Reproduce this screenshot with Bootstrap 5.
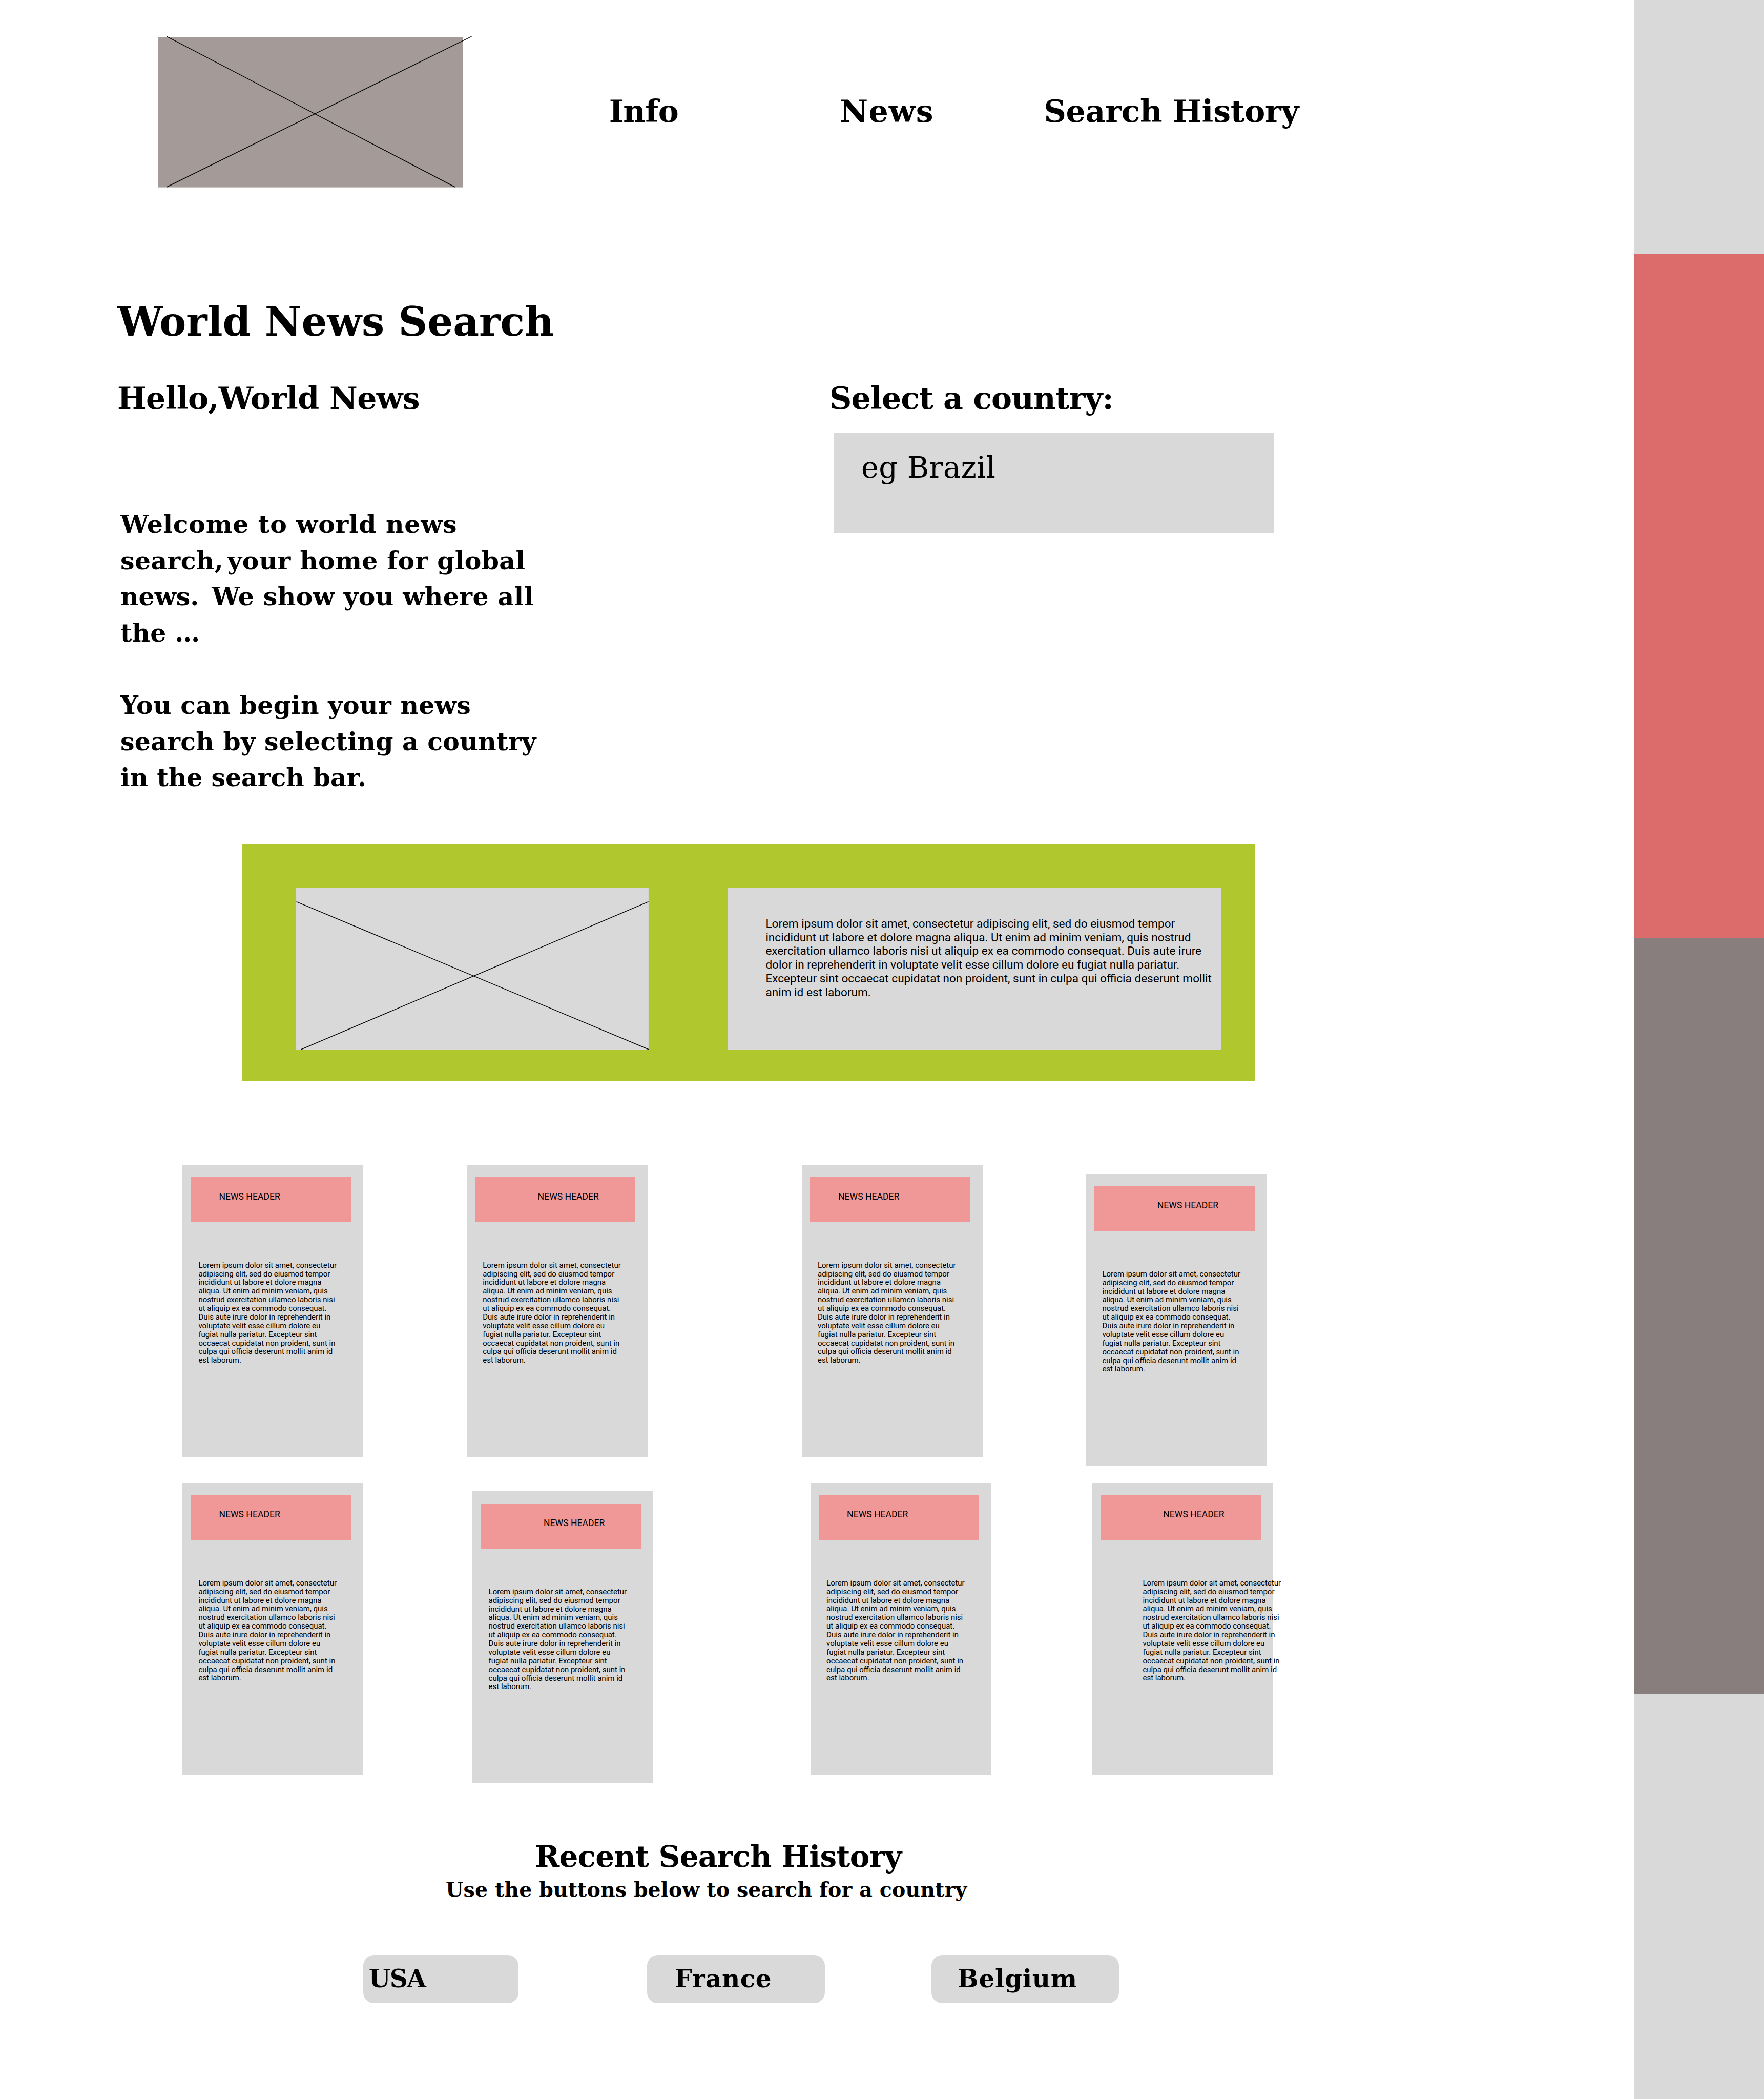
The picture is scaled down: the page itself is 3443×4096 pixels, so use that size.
<!DOCTYPE html>
<html lang="en">
<head>
<meta charset="utf-8">
<title>World News Search</title>
<link href="https://cdn.jsdelivr.net/npm/bootstrap@5.3.0/dist/css/bootstrap.min.css" rel="stylesheet">
<script src="https://cdn.jsdelivr.net/npm/bootstrap@5.3.0/dist/js/bootstrap.bundle.min.js"></script>
<style>
body{width:3443px;height:4096px;background:#fff;color:#000;font-family:Roboto,"Liberation Sans",sans-serif;overflow:hidden}
.slab{font-family:"DejaVu Serif",serif;font-weight:700;white-space:nowrap;line-height:1;margin:0;color:#000}
.page{width:3189px}
.rail{width:254px}
.rail-a{height:494.5px;background:#d9d9d9}
.rail-b{height:1336px;background:#dc6b6b}
.rail-c{height:1474.5px;background:#887e7d}
.top-bar{height:588.5px;padding:72px 0 0 307.7px}
.logo-box{width:595.3px;height:293.6px;overflow:visible}
.menu{margin:114.8px 0 0 285.7px;font-size:60px}
.menu .slab{padding:0}
.m-info{width:450.7px;letter-spacing:-.5px}
.m-news{width:398.1px;letter-spacing:1.2px}
.m-hist{letter-spacing:-.2px}
.main-title{font-size:78.5px;margin-left:229.2px}
.intro{height:900.2px;margin-top:80.2px;padding-left:229px}
.intro-left{width:1390px}
.sub-title{font-size:60px}
.intro-text{font-size:48.9px;line-height:70.6px;margin:180.9px 0 0 6px}
.country-box{width:860.6px;height:194.8px;background:#d9d9d9;margin:37.6px 0 0 7.9px;padding:39px 0 0 54.2px;font-size:57.5px;font-weight:400;letter-spacing:.2px}
.feature{width:1977.5px;height:463px;margin-left:471.5px;padding:84.6px 0 0 106.5px;background:#b0c82e}
.feature-pic{width:687.9px;height:316.4px;overflow:visible}
.feature-text{width:962.8px;height:316.4px;margin-left:155.1px;padding:57.7px 0 0 73.4px;background:#d9d9d9;font-size:22.6px;line-height:26.85px;white-space:nowrap}
.news-row{padding-left:356px}
.news-1{height:620.1px;margin-top:162.7px}
.news-2{height:701.2px}
.news-card{width:353px;height:569.5px;background:#d9d9d9;padding:23.6px 0 0 16.4px}
.news-head{width:313.3px;height:88px;background:#f09898;font-size:17.6px;line-height:20px;padding:28px 0 0 55px}
.news-head.far{padding-left:122.4px}
.news-body{margin:76px 0 0 15px;font-size:15px;line-height:16.88px;white-space:nowrap}
.news-body.shifted{margin-left:82.6px}
.lowered{margin-top:17.1px}
.hist-title{font-size:58px;margin-left:1043.9px;letter-spacing:-.7px}
.hist-sub{font-size:39.5px;margin:15.8px 0 0 870px;letter-spacing:.1px}
.hist-btns{margin-top:107.1px;padding-left:708.9px}
.hist-btns .btn{height:94.6px;border:0;border-radius:21px;background:#d9d9d9;font-size:48.5px;text-align:left;padding:0 0 1.8px}
</style>
</head>
<body class="d-flex">
<main class="page flex-shrink-0">
  <header class="top-bar d-flex align-items-start">
    <svg class="logo-box flex-shrink-0" viewBox="0 0 595.3 293.6"><rect width="595.3" height="293.6" fill="#a49a98"/><path d="M17.8-.7L580 293M17.3 293L612.4-.8" stroke="#000" stroke-width="1.5" fill="none"/></svg>
    <nav class="menu d-flex">
      <a class="slab m-info text-decoration-none">Info</a>
      <a class="slab m-news text-decoration-none">News</a>
      <a class="slab m-hist text-decoration-none">Search History</a>
    </nav>
  </header>
  <h1 class="slab main-title">World News Search</h1>
  <section class="intro d-flex">
    <div class="intro-left flex-shrink-0">
      <h2 class="slab sub-title" style="letter-spacing:-.6px">Hello,World News</h2>
      <p class="slab intro-text"><span style="letter-spacing:.75px">Welcome to world news</span><br><span style="letter-spacing:.4px">search<span style="letter-spacing:8px">,</span>your home for global</span><br>news.<span style="letter-spacing:-4.5px">&nbsp; </span><span style="letter-spacing:.45px">We show you where all</span><br>the …<br><br><span style="letter-spacing:.35px">You can begin your news</span><br><span style="letter-spacing:.3px">search by selecting a country</span><br>in the search bar.</p>
    </div>
    <div>
      <h2 class="slab sub-title" style="letter-spacing:-.8px">Select a country:</h2>
      <div class="slab country-box">eg Brazil</div>
    </div>
  </section>
  <section class="feature d-flex">
    <svg class="feature-pic flex-shrink-0" viewBox="0 0 687.9 316.4"><rect width="687.9" height="316.4" fill="#d9d9d9"/><path d="M.5 27.6L687.9 315.7M10 315.7L687.6 27.6" stroke="#000" stroke-width="1.5" fill="none"/></svg>
    <div class="feature-text flex-shrink-0">Lorem ipsum dolor sit amet, consectetur adipiscing elit, sed do eiusmod tempor<br>incididunt ut labore et dolore magna aliqua. Ut enim ad minim veniam, quis nostrud<br>exercitation ullamco laboris nisi ut aliquip ex ea commodo consequat. Duis aute irure<br>dolor in reprehenderit in voluptate velit esse cillum dolore eu fugiat nulla pariatur.<br>Excepteur sint occaecat cupidatat non proident, sunt in culpa qui officia deserunt mollit<br>anim id est laborum.</div>
  </section>
  <section class="news-row news-1 d-flex align-items-start" id="rowA"></section>
  <section class="news-row news-2 d-flex align-items-start" id="rowB"></section>
  <h2 class="slab hist-title">Recent Search History</h2>
  <p class="slab hist-sub">Use the buttons below to search for a country</p>
  <div class="hist-btns d-flex">
    <button class="btn slab" style="width:303.2px;padding-left:10.9px;letter-spacing:-1.4px">USA</button>
    <button class="btn slab" style="width:347.8px;margin-left:250.6px;padding-left:54.2px;letter-spacing:.5px">France</button>
    <button class="btn slab" style="width:366.6px;margin-left:207.1px;padding-left:51.2px;letter-spacing:.7px">Belgium</button>
  </div>
</main>
<aside class="rail flex-shrink-0 d-flex flex-column">
  <div class="rail-a"></div><div class="rail-b"></div><div class="rail-c"></div><div class="rail-a flex-grow-1"></div>
</aside>
<script>
const lines = ["Lorem ipsum dolor sit amet, consectetur","adipiscing elit, sed do eiusmod tempor","incididunt ut labore et dolore magna","aliqua. Ut enim ad minim veniam, quis","nostrud exercitation ullamco laboris nisi","ut aliquip ex ea commodo consequat.","Duis aute irure dolor in reprehenderit in","voluptate velit esse cillum dolore eu","fugiat nulla pariatur. Excepteur sint","occaecat cupidatat non proident, sunt in","culpa qui officia deserunt mollit anim id","est laborum."];
// each card: gap to the previous card, then extra classes for card, header and body
const rows = {
  rowA: [[0,"","",""],[201.8,"","far",""],[300.8,"","",""],[202.4,"lowered","far",""]],
  rowB: [[0,"","",""],[213.2,"lowered","far",""],[306.5,"","",""],[196.8,"","far","shifted"]]
};
for (const id in rows)
  document.getElementById(id).innerHTML = rows[id].map(([gap,c,h,b]) =>
    `<article class="news-card flex-shrink-0 ${c}" style="margin-left:${gap}px"><div class="news-head ${h}">NEWS HEADER</div><div class="news-body ${b}">${lines.join("<br>")}</div></article>`).join("");
</script>
</body>
</html>
